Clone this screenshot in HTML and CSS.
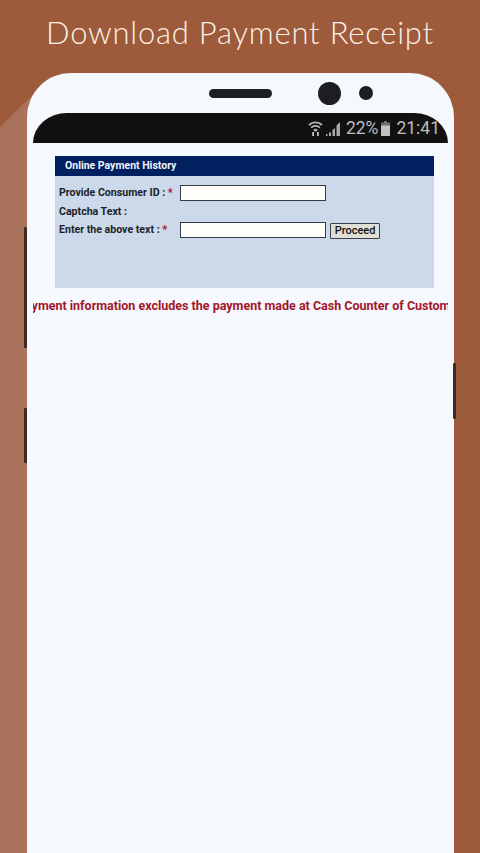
FILE: index.html
```html
<!DOCTYPE html>
<html lang="en">
<head>
<meta charset="utf-8">
<title>Download Payment Receipt</title>
<link rel="stylesheet" href="styles.css">
</head>
<body>
<h1 class="headline">Download Payment Receipt</h1>
<div class="phone">
  <span class="side-btn side-left-a"></span>
  <span class="side-btn side-left-b"></span>
  <span class="side-btn side-right"></span>
  <div class="phone-top">
    <span class="speaker"></span>
    <span class="camera"></span>
    <span class="sensor"></span>
  </div>
  <div class="screen">
    <div class="statusbar">
      <svg class="ic-wifi" viewBox="0 0 15 16" width="15" height="16">
        <path d="M1 5C4.500 1.500 10.500 1.500 14 5" fill="none" stroke="#b9b9b9" stroke-width="1.800"/>
        <path d="M3.200 7.600C5.500 5.300 9.500 5.300 11.800 7.600" fill="none" stroke="#b9b9b9" stroke-width="1.800"/>
        <path d="M5.200 9.800C6.500 8.500 8.500 8.500 9.800 9.800L7.500 12Z" fill="#b9b9b9"/>
        <path d="M4.200 16V12H6V16ZM9 16V12H10.800V16Z" fill="#c4c4c4"/>
      </svg>
      <svg class="ic-signal" viewBox="0 0 15 15" width="15" height="15">
        <path d="M0 15H1.500V13H0ZM3 15H5V11.500H3ZM6.500 15H9V7L6.500 9ZM10.500 15H14V1L10.500 4.500Z" fill="#a9a9a9"/>
      </svg>
      <span class="st-pct">22%</span>
      <svg class="ic-batt" viewBox="0 0 9 15" width="9" height="15">
        <path d="M3 0H6V1.500H9V15H0V1.500H3Z" fill="#6f6f6f"/>
        <path d="M0 4.500H9V15H0Z" fill="#c2c2c2"/>
      </svg>
      <span class="st-time">21:41</span>
    </div>
    <section class="panel">
      <h2 class="panel-head">Online Payment History</h2>
      <form class="panel-form">
        <label class="lbl">Provide Consumer ID : <b class="req">*</b></label>
        <input class="field" type="text">
        <span></span>
        <span class="lbl">Captcha Text :</span>
        <span></span>
        <span></span>
        <label class="lbl">Enter the above text : <b class="req">*</b></label>
        <input class="field" type="text">
        <button class="proceed" type="button">Proceed</button>
      </form>
    </section>
    <div class="ticker"><p class="ticker-text">Payment information excludes the payment made at Cash Counter of Customer Care Centre</p></div>
  </div>
</div>
</body>
</html>
```
FILE: styles.css
```css
* { box-sizing: border-box; }
html, body { margin: 0; padding: 0; }
body {
  width: 480px;
  height: 853px;
  overflow: hidden;
  background-color: #9e5b3b;
  background-image: linear-gradient(135deg, #9e5b3b 0, #9e5b3b 90.5px, #a9735b 90.5px, #a9735b 100%);
  background-size: 40px 100%;
  background-repeat: no-repeat;
  display: flex;
  flex-direction: column;
  align-items: flex-start;
}
.headline {
  margin: 0;
  width: 480px;
  height: 73px;
  padding-top: 13px;
  text-align: center;
  font: 300 31px/38px Lato, sans-serif;
  letter-spacing: 0.77px;
  color: #fbf1e6;
}
.phone {
  position: relative;
  margin-left: 27px;
  width: 427px;
  height: 780px;
  background: #f5f8fd;
  border-radius: 44px 44px 0 0;
  flex: none;
}
.side-btn { position: absolute; width: 3px; background: #3f2a26; border-radius: 1px; }
.side-left-a { left: -3px; top: 154px; height: 121px; }
.side-left-b { left: -3px; top: 335px; height: 55px; }
.side-right { right: -2px; top: 290px; height: 56px; }
.phone-top {
  height: 40px;
  display: flex;
  align-items: center;
  padding-left: 182px;
}
.speaker { width: 63px; height: 9px; border-radius: 5px; background: #1c2025; margin-right: 46px; }
.camera { width: 23px; height: 23px; border-radius: 50%; background: #1c1e22; margin-right: 18px; }
.sensor { width: 14px; height: 14px; border-radius: 50%; background: #1c1e22; }
.screen { margin-left: 6px; width: 415px; overflow: hidden; }
.statusbar {
  height: 30px;
  background: #111;
  border-radius: 34px 34px 0 0 / 30px 30px 0 0;
  display: flex;
  align-items: center;
  justify-content: flex-end;
  padding-right: 8px;
  color: #bdbdbd;
  font: 400 17.5px/20px Roboto, sans-serif;
}
.ic-wifi { margin-right: 3px; }
.ic-signal { margin-right: 5px; }
.st-pct { margin-right: 3px; }
.ic-batt { margin-right: 6px; }
.panel { margin: 13px 0 0 22px; width: 379px; height: 132px; background: #ccd9eb; }
.panel-head {
  margin: 0;
  height: 20px;
  padding-left: 10px;
  background: #00205f;
  color: #f0f4fa;
  font: 700 10.5px/20px Roboto, sans-serif;
}
.panel-form {
  display: grid;
  grid-template-columns: 121px 146px auto;
  grid-template-rows: 16px 21px 16px;
  align-items: center;
  padding: 9px 0 0 4px;
}
.lbl { font: 700 10.6px/16px Roboto, sans-serif; color: #1b1f27; white-space: nowrap; }
.req { color: #b0102e; }
.field {
  width: 146px;
  height: 16px;
  padding: 0;
  border: 1px solid #333b46;
  background: #fffefa;
  border-radius: 0;
}
.proceed {
  justify-self: start;
  margin: 2px 0 0 4px;
  width: 50px;
  height: 16px;
  padding: 0;
  border: 1px solid #39404a;
  border-radius: 1px;
  background: #dfdfd5;
  color: #111;
  font: 500 11px/14px Roboto, sans-serif;
}
.ticker { margin-top: 9px; overflow: hidden; height: 17px; }
.ticker-text {
  margin: 0 0 0 -16px;
  white-space: nowrap;
  color: #a3162a;
  font: 700 12.5px/17px Roboto, sans-serif;
}
```
